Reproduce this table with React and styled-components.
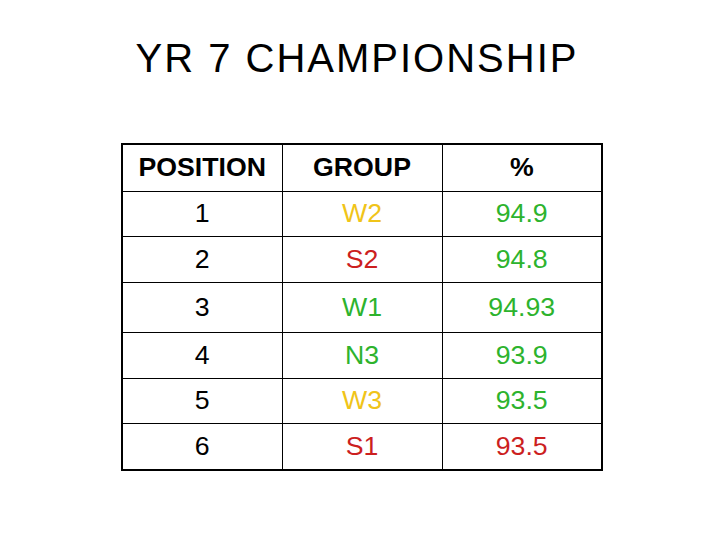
import React from "react";
import styled, { createGlobalStyle } from "styled-components";

const GlobalStyle = createGlobalStyle`
  html, body {
    margin: 0;
    padding: 0;
    background: #ffffff;
  }
`;

const Slide = styled.div`
  width: 720px;
  height: 540px;
  display: flex;
  flex-direction: column;
  align-items: center;
  font-family: "Liberation Sans", Arial, sans-serif;
  color: #000;
`;

const Title = styled.h1`
  margin: 34px 0 0 -6px;
  font-size: 40px;
  line-height: 48px;
  font-weight: normal;
  letter-spacing: 2px;
`;

const Table = styled.table`
  margin: 61px 0 0 4px;
  border-collapse: collapse;
  border: 2px solid #000;
  table-layout: fixed;
  width: 482px;
`;

const Row = styled.tr`
  height: ${(p) => p.h}px;
`;

const HeadCell = styled.th`
  border: 1px solid #000;
  font-size: 26.7px;
  font-weight: bold;
  text-align: center;
  vertical-align: middle;
  padding: 0;
`;

const Cell = styled.td`
  border: 1px solid #000;
  font-size: 26.7px;
  text-align: center;
  vertical-align: middle;
  padding: 0;
  color: ${(p) => p.tone || "#000"};
`;

const YELLOW = "#f0c419";
const GREEN = "#2db32d";
const RED = "#cc1f1f";

const rows = [
  { pos: "1", group: "W2", gc: YELLOW, pct: "94.9", pc: GREEN, h: 45 },
  { pos: "2", group: "S2", gc: RED, pct: "94.8", pc: GREEN, h: 46 },
  { pos: "3", group: "W1", gc: GREEN, pct: "94.93", pc: GREEN, h: 50 },
  { pos: "4", group: "N3", gc: GREEN, pct: "93.9", pc: GREEN, h: 46 },
  { pos: "5", group: "W3", gc: YELLOW, pct: "93.5", pc: GREEN, h: 45 },
  { pos: "6", group: "S1", gc: RED, pct: "93.5", pc: RED, h: 47 },
];

export default function App() {
  return (
    <>
      <GlobalStyle />
      <Slide>
        <Title>YR 7 CHAMPIONSHIP</Title>
        <Table>
          <tbody>
            <Row h={47}>
              <HeadCell>POSITION</HeadCell>
              <HeadCell>GROUP</HeadCell>
              <HeadCell>%</HeadCell>
            </Row>
            {rows.map((r) => (
              <Row key={r.pos} h={r.h}>
                <Cell>{r.pos}</Cell>
                <Cell tone={r.gc}>{r.group}</Cell>
                <Cell tone={r.pc}>{r.pct}</Cell>
              </Row>
            ))}
          </tbody>
        </Table>
      </Slide>
    </>
  );
}
